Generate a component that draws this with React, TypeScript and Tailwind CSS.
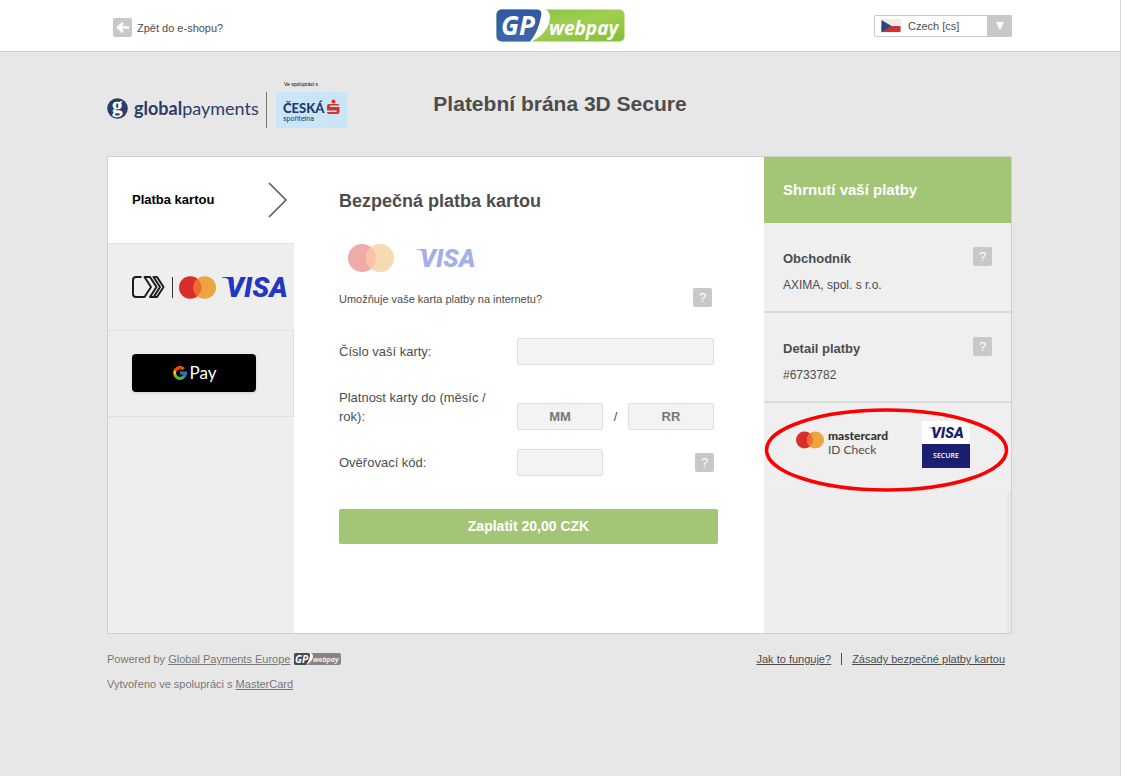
import React from "react";
import { FcGoogle } from "react-icons/fc";

const years = ["25", "26", "27", "28", "29", "30"];

function VisaMark({ className = "" }: { className?: string }) {
  return (
    <svg viewBox="0 0 64 22" className={`overflow-visible ${className}`} role="img" aria-label="Visa">
      <path d="M0 1h11l1 6C9 3.500 5 2 0 1.500z" fill="currentColor" />
      <text
        x="4"
        y="21"
        fill="currentColor"
        fontFamily="Roboto, Noto Sans, sans-serif"
        fontSize="28"
        fontWeight="900"
        fontStyle="italic"
      >
        VISA
      </text>
    </svg>
  );
}

function MastercardMark({ className = "" }: { className?: string }) {
  return (
    <svg viewBox="0 0 46 28" className={className} role="img" aria-label="Mastercard">
      <circle cx="14" cy="14" r="14" fill="#d92f2b" />
      <circle cx="32" cy="14" r="14" fill="#eba440" />
      <path d="M23 3.300a14 14 0 0 1 0 21.400a14 14 0 0 1 0-21.400z" fill="#f06c2b" />
    </svg>
  );
}

function WebpayLogo() {
  return (
    <svg viewBox="0 0 129 33" className="h-[33px] w-[129px] overflow-visible" role="img" aria-label="GP webpay">
      <defs>
        <linearGradient id="wpGreen" x1="0" y1="0" x2="1" y2="1">
          <stop offset="0" stopColor="#7fbb3c" />
          <stop offset="0.500" stopColor="#a0cf4f" />
          <stop offset="1" stopColor="#85bd3c" />
        </linearGradient>
        <linearGradient id="wpBlue" x1="0" y1="0" x2="0" y2="1">
          <stop offset="0" stopColor="#2f56a0" />
          <stop offset="1" stopColor="#3f66ad" />
        </linearGradient>
      </defs>
      <rect x="0.500" y="0.500" width="128" height="32" rx="5" fill="url(#wpGreen)" />
      <path d="M35 33C48 26 54 17 54 8c0-4-2-7-6-8.500L34 0v33z" fill="#fff" />
      <path d="M5.500 0.500H41c4 0 5 3 4 7-2 10-5 18-11 25H5.500a5 5 0 0 1-5-5v-22a5 5 0 0 1 5-5z" fill="url(#wpBlue)" />
      <text x="5" y="26" fill="#fff" fontFamily="Open Sans, sans-serif" fontSize="26" fontWeight="700" fontStyle="italic">
        GP
      </text>
      <text x="53" y="26" fill="#fff" fontFamily="Open Sans, sans-serif" fontSize="19" fontWeight="700" fontStyle="italic">
        webpay
      </text>
    </svg>
  );
}

function WebpayBadge() {
  return (
    <svg viewBox="0 0 47 12" className="h-3 w-[47px] overflow-visible" role="img" aria-label="GP webpay">
      <rect width="47" height="12" rx="2" fill="#858585" />
      <path d="M12 12c5-3 7-6 7-9 0-1-1-3-3-3h-3v12z" fill="#fff" />
      <path d="M2 0h12c2 0 2 1 2 3-1 4-2 6-4 9H2a2 2 0 0 1-2-2V2a2 2 0 0 1 2-2z" fill="#4a4a4a" />
      <text x="1" y="10" fill="#fff" fontFamily="Open Sans, sans-serif" fontSize="10" fontWeight="700" fontStyle="italic">
        GP
      </text>
      <text x="19" y="9" fill="#eee" fontFamily="Open Sans, sans-serif" fontSize="7" fontWeight="700" fontStyle="italic">
        webpay
      </text>
    </svg>
  );
}

function GlobalPaymentsLogo() {
  return (
    <div className="flex items-center gap-1.5 text-[#293c6c]">
      <svg viewBox="0 0 21 22" className="h-[22px] w-[21px] overflow-visible" aria-hidden="true">
        <circle cx="10.500" cy="11.500" r="10.300" fill="#293c6c" />
        <text x="5" y="15" fill="#fff" stroke="#fff" strokeWidth="0.300" fontFamily="Liberation Serif, serif" fontSize="21" fontWeight="700">
          g
        </text>
      </svg>
      <span className="w-[124px] font-['Lato',sans-serif] text-[18px] leading-6 whitespace-nowrap">
        <b>global</b>payments
      </span>
    </div>
  );
}

function BankLogo() {
  return (
    <svg viewBox="0 0 71 36" className="h-9 w-[71px]" role="img" aria-label="Česká spořitelna">
      <rect width="71" height="36" fill="#c9e6f9" />
      <text x="7" y="21" fill="#26386b" fontFamily="Lato, sans-serif" fontSize="13" fontWeight="900">
        ČESKÁ
      </text>
      <text x="7" y="29" fill="#26386b" fontFamily="Roboto, sans-serif" fontSize="7">
        spořitelna
      </text>
      <circle cx="57.500" cy="9.500" r="2" fill="#d6322e" />
      <path d="M51 14a2 2 0 0 1 2-2h9a2 2 0 0 1 1.500 1.500H54v1.500h9.500v5a2 2 0 0 1-2 2h-9a2 2 0 0 1-1.500-2h9.500v-1.500H51z" fill="#d6322e" />
    </svg>
  );
}

function ClickToPayIcon() {
  return (
    <svg viewBox="0 0 34 22" className="h-[22px] w-[34px]" fill="none" stroke="#1c1c1c" strokeWidth="2" strokeLinejoin="round" aria-hidden="true">
      <path d="M9.500 1H4a3 3 0 0 0-3 3v14a3 3 0 0 0 3 3h8.500l6.500-10-6.500-10h5.500l6.500 10-6.500 10h7l6.500-10-6.500-10H21.500l6.500 10-6 9.500" />
    </svg>
  );
}

function HelpButton({ label }: { label: string }) {
  return (
    <button type="button" aria-label={label} className="h-[19px] w-[19px] shrink-0 rounded-xs bg-[#c8c8c8] text-center text-[13px] leading-[19px] text-white">
      ?
    </button>
  );
}

function Header() {
  return (
    <header className="border-b border-[#cfcfcf] bg-white">
      <div className="mx-auto grid h-[51px] max-w-[906px] grid-cols-[1fr_auto_1fr] items-center">
        <a href="#" className="flex items-center gap-[5px] pt-1 pl-1.5 text-[11px]">
          <span className="flex h-[19px] w-[19px] items-center justify-center rounded-xs bg-[#c8c8c8]">
            <svg viewBox="0 0 13 11" className="h-[11px] w-[13px]" fill="none" stroke="#fff" strokeWidth="2.500" aria-hidden="true">
              <path d="M7 1L2 5.500L7 10M2 5.500H13" />
            </svg>
          </span>
          <span className="pt-0.5">Zpět do e-shopu?</span>
        </a>
        <WebpayLogo />
        <div className="relative mr-px w-[138px] justify-self-end">
          <select
            aria-label="Jazyk"
            className="block h-[22px] w-full appearance-none rounded-xs border border-[#c8c8c8] bg-white pl-[33px] text-[11px] leading-5"
          >
            <option>Czech [cs]</option>
            <option>English [en]</option>
          </select>
          <svg viewBox="0 0 20 14" className="pointer-events-none absolute top-1 left-[7px] h-3.5 w-5" aria-hidden="true">
            <rect width="20" height="14" fill="#ececec" />
            <rect x="0.500" y="7" width="19" height="6" fill="#c8342f" />
            <path d="M0.500 1l10 6l-10 6z" fill="#2c437c" />
          </svg>
          <span className="pointer-events-none absolute top-0 right-0 flex h-[22px] w-[25px] items-center justify-center rounded-r-xs bg-[#c8c8c8]">
            <svg viewBox="0 0 8 8" className="h-2 w-2" aria-hidden="true">
              <path d="M0 0h8L4 8z" fill="#fff" />
            </svg>
          </span>
        </div>
      </div>
    </header>
  );
}

function PaymentMethods() {
  return (
    <nav className="bg-[#eee]">
      <a href="#" className="flex h-[86px] items-center justify-between bg-white pr-1.5 pl-6 text-[13px] font-bold text-black">
        Platba kartou
        <svg viewBox="0 0 20 36" className="h-9 w-5" fill="none" stroke="#555" strokeWidth="1.500" aria-hidden="true">
          <path d="M1 1l17 17L1 35" />
        </svg>
      </a>
      <a href="#" className="flex h-[88px] items-center border-y border-[#dfdfdf] pl-6">
        <ClickToPayIcon />
        <span className="mx-1.5 h-[21px] w-px bg-[#333]" />
        <MastercardMark className="h-[23px] w-[37px]" />
        <VisaMark className="ml-1.5 h-[22px] w-[64px] text-[#1f36c7]" />
      </a>
      <div className="flex h-[86px] items-center border-r border-b border-[#dfdfdf] pb-0.5 pl-6">
        <button
          type="button"
          aria-label="Google Pay"
          className="flex h-[38px] w-[124px] items-center justify-center gap-0.5 rounded-sm bg-black font-['Lato',sans-serif] text-[17px] text-white shadow"
        >
          <FcGoogle size={16} />
          Pay
        </button>
      </div>
    </nav>
  );
}

const fieldClass =
  "h-[27px] rounded-xs border border-[#e0e0e0] bg-[#f3f3f3] text-[13px]";

function CardForm() {
  return (
    <form className="bg-white pt-8 pr-[46px] pb-[89px] pl-[45px]">
      <h2 className="text-[18px] leading-6 font-bold">Bezpečná platba kartou</h2>
      <div className="mt-[31px] flex items-center gap-[22px] pl-[9px] opacity-40">
        <MastercardMark className="h-[28px] w-[46px]" />
        <VisaMark className="h-5 w-[58px] text-[#1f36c7]" />
      </div>
      <div className="mt-[15px] flex items-center justify-between pr-1.5">
        <p className="pt-1 text-[11px] leading-4">Umožňuje vaše karta platby na internetu?</p>
        <HelpButton label="Nápověda k platbám na internetu" />
      </div>

      <div className="mt-[31px] grid grid-cols-[178px_1fr] pr-1 text-[13px] leading-[19px]">
        <label htmlFor="card" className="pt-1">
          Číslo vaší karty:
        </label>
        <input id="card" className={`${fieldClass} w-full px-2`} />

        <label htmlFor="month" className="mt-[23px] pr-6">
          Platnost karty do (měsíc / rok):
        </label>
        <div className="mt-[38px] flex items-center justify-between">
          <select id="month" className={`${fieldClass} w-[86px] appearance-none text-center font-bold text-[#777]`}>
            <option>MM</option>
            <option>01</option>
            <option>02</option>
          </select>
          <span>/</span>
          <select aria-label="Rok" className={`${fieldClass} w-[86px] appearance-none text-center font-bold text-[#777]`}>
            <option>RR</option>
            {years.map((year) => (
              <option key={year}>{year}</option>
            ))}
          </select>
        </div>

        <label htmlFor="cvv" className="mt-[19px] pt-1">
          Ověřovací kód:
        </label>
        <div className="mt-[19px] flex items-center justify-between">
          <input id="cvv" className={`${fieldClass} w-[86px] px-2`} />
          <HelpButton label="Nápověda k ověřovacímu kódu" />
        </div>
      </div>

      <button type="submit" className="mt-[33px] h-[35px] w-full rounded-xs bg-[#a3c576] text-[14px] font-bold text-white">
        Zaplatit 20,00 CZK
      </button>
    </form>
  );
}

function SummaryRow({ title, value }: { title: string; value: string }) {
  return (
    <section className="flex h-[90px] justify-between border-b-2 border-[#dadada] pt-6 pr-[19px] pl-[19px]">
      <div className="pt-1 text-[13px] leading-4">
        <h3 className="font-bold">{title}</h3>
        <p className="mt-2.5 text-[12px]">{value}</p>
      </div>
      <HelpButton label={`Nápověda: ${title}`} />
    </section>
  );
}

function Summary() {
  return (
    <aside className="flex flex-col bg-[#efefef]">
      <h2 className="bg-[#a3c576] px-[19px] text-[15px] leading-[66px] font-bold text-white">Shrnutí vaší platby</h2>
      <SummaryRow title="Obchodník" value="AXIMA, spol. s r.o." />
      <SummaryRow title="Detail platby" value="#6733782" />
      <div className="relative flex h-[88px] items-start pt-[18px] pl-8">
        <MastercardMark className="mt-2.5 h-[18px] w-[28px]" />
        <div className="ml-1 w-[64px] pt-2 font-['Lato',sans-serif] text-[12px] leading-[14px]">
          <p className="font-black text-[#333]">mastercard</p>
          <p>ID Check</p>
        </div>
        <div className="ml-[30px] w-[48px] bg-[#1a1f71] text-center">
          <div className="flex h-[23px] items-center justify-center bg-white">
            <VisaMark className="h-3 w-[34px] text-[#1a1f71]" />
          </div>
          <p className="font-['Open_Sans',sans-serif] text-[7px] leading-6 font-semibold text-white">SECURE</p>
        </div>
        <svg viewBox="0 0 246 86" className="pointer-events-none absolute top-1 left-0 h-[86px] w-[246px]" aria-hidden="true">
          <ellipse cx="122.500" cy="43" rx="120" ry="40" fill="none" stroke="#f00" strokeWidth="3.500" />
        </svg>
      </div>
      <div className="grow border-r-4 border-[#e8e8e8] bg-[#eee]" />
    </aside>
  );
}

function Footer() {
  return (
    <footer className="mt-4 flex items-start justify-between text-[11px] leading-[18px] text-[#777]">
      <div>
        <p className="flex items-center gap-1">
          <span>
            Powered by{" "}
            <a href="#" className="underline">
              Global Payments Europe
            </a>
          </span>
          <WebpayBadge />
        </p>
        <p className="mt-[7px]">
          Vytvořeno ve spolupráci s{" "}
          <a href="#" className="underline">
            MasterCard
          </a>
        </p>
      </div>
      <div className="flex items-center pr-2 text-[#4d4d4d]">
        <a href="#" className="underline">
          Jak to funguje?
        </a>
        <span className="mx-2.5 h-3 w-px bg-[#4d4d4d]" />
        <a href="#" className="underline">
          Zásady bezpečné platby kartou
        </a>
      </div>
    </footer>
  );
}

export default function App() {
  return (
    <div className="min-h-screen border-r border-[#d8d8d8] bg-[#e7e7e7] font-['Liberation_Sans',Arial,sans-serif] text-[#4d4d4d]">
      <Header />
      <main className="mx-auto max-w-[906px]">
        <div className="grid h-[104px] grid-cols-[1fr_auto_1fr] items-center">
          <div className="flex items-end">
            <div className="pb-2">
              <GlobalPaymentsLogo />
            </div>
            <span className="mr-[9px] ml-2 h-9 w-px bg-[#777]" />
            <div>
              <p className="pb-1 pl-2 text-[5px] leading-2 text-black">Ve spolupráci s</p>
              <BankLogo />
            </div>
          </div>
          <h1 className="text-[21px] leading-6 font-bold">Platební brána 3D Secure</h1>
        </div>
        <div className="mr-px grid grid-cols-[186px_1fr_247px] border border-[#cfcfcf]">
          <PaymentMethods />
          <CardForm />
          <Summary />
        </div>
        <Footer />
      </main>
    </div>
  );
}
